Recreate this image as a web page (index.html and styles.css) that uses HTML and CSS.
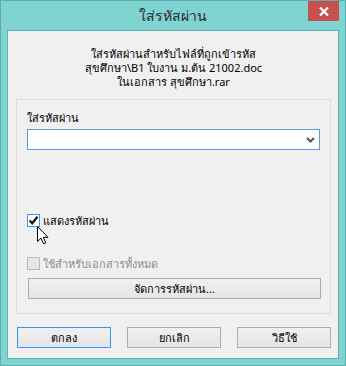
FILE: index.html
```html
<!DOCTYPE html>
<html lang="th">
<head>
    <meta charset="UTF-8">
    <title>ใส่รหัสผ่าน</title>
    <link rel="stylesheet" href="styles.css">
</head>
<body>
    <div class="window">
        <div class="titlebar">
            <span class="title">ใส่รหัสผ่าน</span>
            <div class="close">
                <svg width="10" height="9" viewBox="0 0 10 9"><path d="M1 0.5 L9 8.5 M9 0.5 L1 8.5" stroke="#fff" stroke-width="2.2"/></svg>
            </div>
        </div>
        <div class="client">
            <div class="info">
                <div>ใส่รหัสผ่านสำหรับไฟล์ที่ถูกเข้ารหัส</div>
                <div>สุขศึกษา\B1 ใบงาน ม.ต้น 21002.doc</div>
                <div>ในเอกสาร สุขศึกษา.rar</div>
            </div>

            <div class="group">
                <div class="label">ใส่รหัสผ่าน</div>
                <div class="combo">
                    <svg class="chev" width="9" height="6" viewBox="0 0 9 6"><path d="M1 1 L4.5 4.5 L8 1" fill="none" stroke="#555" stroke-width="2"/></svg>
                </div>

                <div class="check check-on">
                    <span class="box">
                        <svg width="11" height="11" viewBox="0 0 11 11"><path d="M1.5 5.5 L4.2 8.3 L9.5 1.8" fill="none" stroke="#111" stroke-width="2.2"/></svg>
                    </span>
                    <span class="check-text">แสดงรหัสผ่าน</span>
                    <svg class="cursor" width="13" height="19" viewBox="0 0 13 19"><path d="M0.5 0.5 L0.5 15.5 L4 12.2 L6.6 17.8 L8.8 16.8 L6.3 11.3 L11 11.3 Z" fill="#fff" stroke="#000" stroke-width="1"/></svg>
                </div>

                <div class="check check-off">
                    <span class="box"></span>
                    <span class="check-text">ใช้สำหรับเอกสารทั้งหมด</span>
                </div>

                <button class="btn wide">จัดการรหัสผ่าน...</button>
            </div>

            <div class="actions">
                <button class="btn default">ตกลง</button>
                <button class="btn">ยกเลิก</button>
                <button class="btn">วิธีใช้</button>
            </div>
        </div>
    </div>
</body>
</html>
```

FILE: styles.css
```css
body {
    margin: 0;
    font-family: "Noto Sans", "DejaVu Sans", sans-serif;
    font-size: 11px;
    color: #000;
}

.window {
    width: 346px;
    height: 366px;
    box-sizing: border-box;
    background-color: #7fd3d1;
    border: 1px solid #5aaeae;
    padding: 0 6px 6px 6px;
}

.titlebar {
    height: 29px;
    position: relative;
    display: flex;
    justify-content: center;
    align-items: center;
}

.title {
    font-size: 14px;
    color: #2b2b2b;
}

.close {
    position: absolute;
    top: 0;
    right: 0;
    width: 31px;
    height: 20px;
    background-color: #c75050;
    display: flex;
    justify-content: center;
    align-items: center;
}

.client {
    height: 329px;
    box-sizing: border-box;
    background-color: #f0f0f0;
    border: 1px solid #62b2b2;
    padding: 16px 7px 0 8px;
}

.info {
    text-align: center;
    line-height: 14px;
    height: 52px;
}

.group {
    border: 1px solid #dcdcdc;
    height: 215px;
    box-sizing: border-box;
    padding: 11px 10px 0 10px;
}

.label {
    line-height: 14px;
    height: 18px;
}

.combo {
    height: 21px;
    box-sizing: border-box;
    background-color: #fff;
    border: 1px solid #569de5;
    display: flex;
    justify-content: flex-end;
    align-items: center;
    padding-right: 4px;
}

.check {
    display: flex;
    align-items: center;
    height: 13px;
    position: relative;
}

.check-on {
    margin-top: 64px;
}

.check-off {
    margin-top: 30px;
    color: #8d8d8d;
}

.box {
    width: 13px;
    height: 13px;
    box-sizing: border-box;
    margin-right: 3px;
    display: flex;
    justify-content: center;
    align-items: center;
}

.check-on .box {
    background-color: #fff;
    border: 1px solid #3399ff;
}

.check-off .box {
    background-color: #e6e6e6;
    border: 1px solid #bcbcbc;
}

.cursor {
    position: absolute;
    left: 10px;
    top: 12px;
}

.btn {
    font-family: inherit;
    font-size: 11px;
    color: #000;
    height: 21px;
    padding: 0;
    box-sizing: border-box;
    border: 1px solid #adadad;
    background: linear-gradient(#f0f0f0, #e5e5e5);
}

.wide {
    display: block;
    width: 293px;
    margin: 8px 0 0 1px;
}

.actions {
    display: flex;
    justify-content: space-between;
    padding: 13px 0 0 1px;
}

.actions .btn {
    width: 94px;
}

.default {
    border-color: #3399ff;
}
```
